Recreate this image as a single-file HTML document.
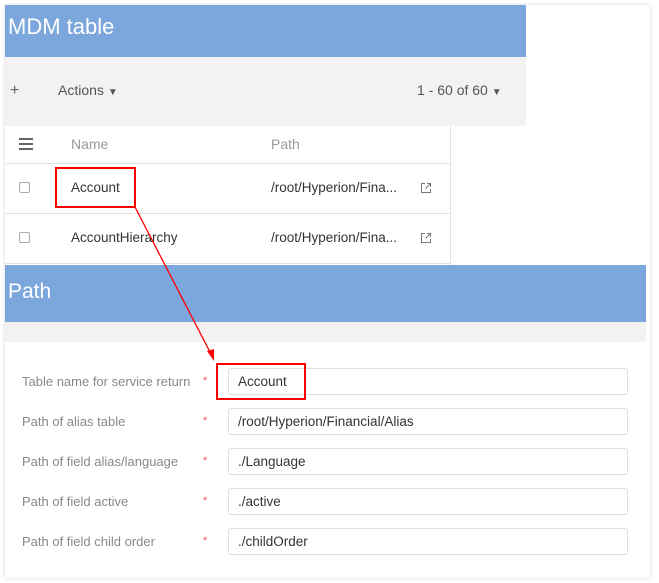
<!DOCTYPE html>
<html><head><style>
*{box-sizing:border-box;margin:0;padding:0}
body{width:659px;height:583px;background:#fff;font-family:"Liberation Sans",sans-serif;position:relative;overflow:hidden}
.a{position:absolute}
.card{left:5px;top:5px;width:645px;height:573px;background:#fff;box-shadow:0 0 4px rgba(0,0,0,.15)}
.blue{background:#7ba7dd;color:#fff}
.gray{background:#f2f2f2}
.t{font-size:13.5px;color:#333}
.lbl{font-size:13px;color:#888}
.inp{left:228px;width:400px;height:27px;border:1px solid #ddd;border-radius:3px;font-size:13.5px;color:#333;padding:5px 9px}
.star{left:203px;color:#e55;font-size:11px}
.cb{width:11px;height:11px;border:1px solid #aaa;border-radius:2px}
.hl{height:1px;background:#e2e2e2}
</style></head><body>
<div class="a card"></div>
<div class="a blue" style="left:5px;top:5px;width:521px;height:52px;font-size:22px;padding:9px 3px">MDM table</div>
<div class="a gray" style="left:5px;top:57px;width:521px;height:69px"></div>
<div class="a" style="left:10px;top:82px;font-size:16px;color:#666">+</div>
<div class="a" style="left:58px;top:82px;font-size:14px;color:#555">Actions <span style="font-size:10px">▼</span></div>
<div class="a" style="left:417px;top:82px;font-size:14px;color:#555">1 - 60 of 60 <span style="font-size:10px">▼</span></div>
<div class="a" style="left:450px;top:126px;width:1px;height:139px;background:#e2e2e2"></div>
<div class="a" style="left:19px;top:138px;width:14px;height:2px;background:#666;box-shadow:0 5px 0 #666,0 10px 0 #666"></div>
<div class="a" style="left:71px;top:136px;font-size:14px;color:#999">Name</div>
<div class="a" style="left:271px;top:136px;font-size:14px;color:#999">Path</div>
<div class="a hl" style="left:5px;top:163px;width:445px"></div>
<div class="a hl" style="left:5px;top:213px;width:445px"></div>
<div class="a hl" style="left:5px;top:263px;width:445px"></div>
<div class="a cb" style="left:19px;top:182px"></div>
<div class="a cb" style="left:19px;top:232px"></div>
<div class="a t" style="left:71px;top:180px">Account</div>
<div class="a t" style="left:71px;top:230px">AccountHierarchy</div>
<div class="a t" style="left:271px;top:180px">/root/Hyperion/Fina...</div>
<div class="a t" style="left:271px;top:230px">/root/Hyperion/Fina...</div>
<svg class="a" style="left:420px;top:182px" width="12" height="12" viewBox="0 0 12 12" fill="none" stroke="#777" stroke-width="1"><path d="M5 1.5H1.5v9h9V7M7 1.5h3.5V5M10.5 1.5L5.5 6.5"/></svg>
<svg class="a" style="left:420px;top:232px" width="12" height="12" viewBox="0 0 12 12" fill="none" stroke="#777" stroke-width="1"><path d="M5 1.5H1.5v9h9V7M7 1.5h3.5V5M10.5 1.5L5.5 6.5"/></svg>
<div class="a blue" style="left:5px;top:265px;width:641px;height:57px;font-size:21px;padding:15px 3px">Path</div>
<div class="a gray" style="left:5px;top:322px;width:641px;height:20px"></div>
<div class="a lbl" style="left:22px;top:374px">Table name for service return</div>
<div class="a lbl" style="left:22px;top:414px">Path of alias table</div>
<div class="a lbl" style="left:22px;top:454px">Path of field alias/language</div>
<div class="a lbl" style="left:22px;top:494px">Path of field active</div>
<div class="a lbl" style="left:22px;top:534px">Path of field child order</div>
<div class="a star" style="top:375px">*</div>
<div class="a star" style="top:415px">*</div>
<div class="a star" style="top:455px">*</div>
<div class="a star" style="top:495px">*</div>
<div class="a star" style="top:535px">*</div>
<div class="a inp" style="top:368px">Account</div>
<div class="a inp" style="top:408px">/root/Hyperion/Financial/Alias</div>
<div class="a inp" style="top:448px">./Language</div>
<div class="a inp" style="top:488px">./active</div>
<div class="a inp" style="top:528px">./childOrder</div>
<div class="a" style="left:55px;top:167px;width:81px;height:41px;border:2px solid #f00"></div>
<div class="a" style="left:216px;top:363px;width:90px;height:37px;border:2px solid #f00"></div>
<svg class="a" style="left:0;top:0" width="659" height="583"><line x1="135" y1="207" x2="211" y2="354" stroke="#f00" stroke-width="1.3"/><path d="M214 361L207 351L214 349Z" fill="#f00"/></svg>
</body></html>
